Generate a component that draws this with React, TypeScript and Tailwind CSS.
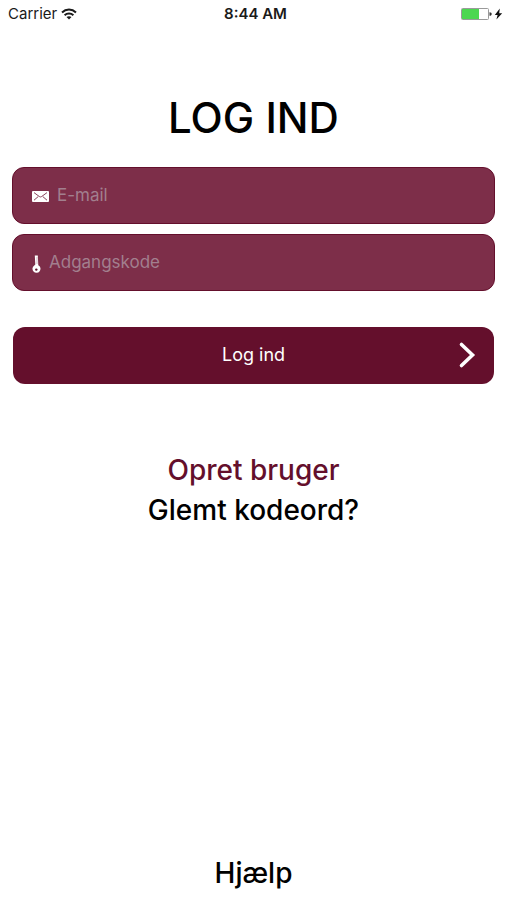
import { useState } from "react";
import type { FormEvent, ReactNode } from "react";

function WifiIcon() {
  return (
    <svg viewBox="0 0 16 12" className="h-3 w-4" fill="none" stroke="#1a1a1a" strokeWidth="2" aria-hidden="true">
      <path d="M1 4.4C5 .6 11 .6 15 4.4" />
      <path d="M3.6 7.2C6.1 4.9 9.9 4.9 12.4 7.2" />
      <path d="M8 11.6 5.5 9.1C6.9 7.9 9.1 7.9 10.5 9.1Z" fill="#1a1a1a" stroke="none" />
    </svg>
  );
}

function BatteryIcon() {
  return (
    <svg viewBox="0 0 42 14" className="h-3.5 w-[42px]" aria-hidden="true">
      <rect x="0.5" y="1.5" width="27" height="11" rx="1" fill="#fff" stroke="#9a9a9a" />
      <rect x="1" y="2" width="17" height="10" fill="#4cd751" />
      <path d="M28.5 5.2c1.6 0 2.2.8 2.2 1.8s-.6 1.8-2.2 1.8Z" fill="#333" />
      <path d="M38.8 1.6 33.8 8h2.8L35.4 12.6 41.2 6.2h-3Z" fill="#111" />
    </svg>
  );
}

function MailIcon() {
  return (
    <svg viewBox="0 0 17 11" className="h-[11px] w-[17px]" aria-hidden="true">
      <rect width="17" height="11" rx="1" fill="#fff" />
      <path d="M2 1.6 7.3 5.5q1.2.9 2.4 0L15 1.6M2 9.2 6.2 5.6M15 9.2 10.8 5.6" fill="none" stroke="#7d2e49" strokeWidth="0.9" />
    </svg>
  );
}

function KeyIcon() {
  return (
    <svg viewBox="0 0 9 18" className="h-[18px] w-[9px]" aria-hidden="true">
      <path d="M2.8.6h3l.5 9.6a4 4 0 1 1-4 .2l1-1Z" fill="#fff" />
      <path d="M5 2v7" stroke="#b98a9a" strokeWidth="0.6" />
      <circle cx="4.3" cy="14.6" r="1.2" fill="#5b1029" />
    </svg>
  );
}

function Field({
  id,
  type,
  label,
  icon,
}: {
  id: string;
  type: string;
  label: string;
  icon: ReactNode;
}) {
  const [value, setValue] = useState("");
  return (
    <div className="flex h-[57px] items-center gap-2 rounded-xl border border-[#640f2c] bg-[#7d2e49] pr-5 pb-0.5 pl-[19px]">
      <label htmlFor={id} className="mt-1 shrink-0">
        {icon}
      </label>
      <input
        id={id}
        type={type}
        aria-label={label}
        placeholder={label}
        value={value}
        onChange={(event) => setValue(event.target.value)}
        className="h-10 min-w-0 flex-1 bg-transparent text-[17px] text-white outline-none placeholder:text-[#a27f8e]"
      />
    </div>
  );
}

export default function App() {
  const submit = (event: FormEvent) => event.preventDefault();

  return (
    <div className="flex min-h-screen flex-col bg-white font-['Inter',sans-serif] text-black">
      <header className="grid h-7 grid-cols-3 items-center pr-1 pl-2 text-[15px] text-[#1a1a1a]">
        <div className="flex items-center gap-1">
          <span>Carrier</span>
          <WifiIcon />
        </div>
        <span className="text-center font-semibold">8:44 AM</span>
        <div className="flex justify-end">
          <BatteryIcon />
        </div>
      </header>

      <main className="flex flex-1 flex-col px-3 pt-[66px] pb-[11px]">
        <h1 className="text-center text-[42px] leading-[48px] font-medium">LOG IND</h1>

        <form onSubmit={submit} className="mt-[25px] flex flex-col">
          <div className="flex flex-col gap-2.5">
            <Field id="email" type="email" label="E-mail" icon={<MailIcon />} />
            <Field id="password" type="password" label="Adgangskode" icon={<KeyIcon />} />
          </div>
          <button
            type="submit"
            className="mx-px mt-9 grid h-[57px] grid-cols-[1fr_auto_1fr] items-center rounded-xl bg-[#640f2c] px-[18px] pb-0.5 text-lg text-white"
          >
            <span className="col-start-2">Log ind</span>
            <svg viewBox="0 0 18 28" className="h-7 w-[18px] justify-self-end" fill="none" stroke="#fff" strokeWidth="3.6" strokeLinecap="round" aria-hidden="true">
              <path d="M3.5 3.5 14.5 14 3.5 24.5" />
            </svg>
          </button>
        </form>

        <nav className="mt-[66px] flex flex-col items-center text-[28px] leading-10 font-medium">
          <a href="#opret" className="text-[#640f2c]">Opret bruger</a>
          <a href="#glemt">Glemt kodeord?</a>
        </nav>

        <a href="#hjaelp" className="mt-auto self-center text-[28px] leading-8 font-medium">Hjælp</a>
      </main>
    </div>
  );
}
